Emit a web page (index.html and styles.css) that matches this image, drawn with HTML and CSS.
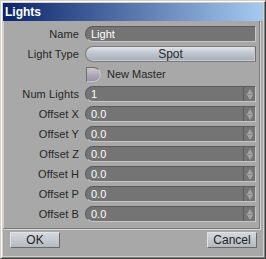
FILE: index.html
```html
<!DOCTYPE html>
<html>
<head>
<meta charset="utf-8">
<link rel="stylesheet" href="styles.css">
</head>
<body>
<div class="window">
  <div class="titlebar">Lights</div>
  <div class="body">
    <div class="panel">
      <div class="label">Name</div>
      <div class="field"><span class="val">Light</span></div>

      <div class="label">Light Type</div>
      <div class="popup">Spot</div>

      <div class="label"></div>
      <div class="check-row"><span class="check"></span><span class="check-label">New Master</span></div>

      <div class="label">Num Lights</div>
      <div class="field"><span class="val">1</span><span class="spin"><span class="up"></span><span class="sep"></span><span class="dn"></span></span></div>

      <div class="label">Offset X</div>
      <div class="field"><span class="val">0.0</span><span class="spin"><span class="up"></span><span class="sep"></span><span class="dn"></span></span></div>

      <div class="label">Offset Y</div>
      <div class="field"><span class="val">0.0</span><span class="spin"><span class="up"></span><span class="sep"></span><span class="dn"></span></span></div>

      <div class="label">Offset Z</div>
      <div class="field"><span class="val">0.0</span><span class="spin"><span class="up"></span><span class="sep"></span><span class="dn"></span></span></div>

      <div class="label">Offset H</div>
      <div class="field"><span class="val">0.0</span><span class="spin"><span class="up"></span><span class="sep"></span><span class="dn"></span></span></div>

      <div class="label">Offset P</div>
      <div class="field"><span class="val">0.0</span><span class="spin"><span class="up"></span><span class="sep"></span><span class="dn"></span></span></div>

      <div class="label">Offset B</div>
      <div class="field"><span class="val">0.0</span><span class="spin"><span class="up"></span><span class="sep"></span><span class="dn"></span></span></div>
    </div>
    <div class="footer">
      <div class="btn">OK</div>
      <div class="btn">Cancel</div>
    </div>
  </div>
</div>
</body>
</html>
```

FILE: styles.css
```css
html, body {
  margin: 0;
  padding: 0;
  background: #d4d0c8;
}
body {
  font-family: "Liberation Sans", Arial, sans-serif;
  font-size: 11px;
}
.window {
  width: 266px;
  height: 259px;
  box-sizing: border-box;
  background: #d4d0c8;
  border: 1px solid;
  border-color: #d4d0c8 #404040 #404040 #d4d0c8;
  box-shadow: inset 1px 1px #ffffff, inset -1px -1px #808080;
  padding: 2px;
  display: flex;
  flex-direction: column;
}
.titlebar {
  height: 18px;
  background: linear-gradient(to right, #0a246a, #a6caf0);
  color: #ffffff;
  font-weight: bold;
  font-size: 12px;
  line-height: 18px;
  padding-left: 2px;
}
.body {
  flex: 1;
  background: #a8a8a8;
  display: flex;
  flex-direction: column;
}
.panel {
  width: 257px;
  height: 208px;
  box-sizing: border-box;
  border-right: 1px solid #7a7a7a;
  border-bottom: 1px solid #7a7a7a;
  border-left: 1px solid #d0d0d0;
  box-shadow: 1px 1px 0 #d6d6d6;
  padding-top: 5px;
  display: grid;
  grid-template-columns: 75px 171px;
  grid-auto-rows: 16px;
  column-gap: 6px;
  row-gap: 4px;
  align-content: start;
}
.label {
  text-align: right;
  color: #262626;
  line-height: 16px;
  white-space: nowrap;
  letter-spacing: 0.1px;
}
.field {
  box-sizing: border-box;
  background: #747474;
  border-radius: 8px 0 0 8px;
  border-top: 1px solid #5a5a5a;
  border-left: 1px solid #5e5e5e;
  border-bottom: 1px solid #c6c6c6;
  border-right: 1px solid #c6c6c6;
  display: flex;
  align-items: center;
  color: #ffffff;
}
.val {
  flex: 1;
  padding-left: 5px;
  line-height: 14px;
}
.spin {
  width: 11px;
  height: 14px;
  border-left: 1px solid #5e5e5e;
  display: flex;
  flex-direction: column;
  align-items: center;
  justify-content: center;
}
.spin .up {
  width: 0;
  height: 0;
  border-left: 3.5px solid transparent;
  border-right: 3.5px solid transparent;
  border-bottom: 5px solid #a4a4a4;
}
.spin .sep {
  width: 7px;
  height: 1px;
  background: #8e8e8e;
}
.spin .dn {
  width: 0;
  height: 0;
  border-left: 3.5px solid transparent;
  border-right: 3.5px solid transparent;
  border-top: 5px solid #a4a4a4;
}
.popup {
  box-sizing: border-box;
  border-radius: 8px 0 0 8px;
  background: linear-gradient(to bottom, #dfe3e9, #bcc3cc 50%, #a4acb7);
  border: 1px solid #7c7c7c;
  border-right-color: #6e6e6e;
  box-shadow: inset -1px -1px #c8ccd2;
  text-align: center;
  line-height: 14px;
  color: #2a2a2a;
  font-size: 12px;
}
.check-row {
  display: flex;
  align-items: center;
  gap: 6px;
}
.check {
  width: 15px;
  height: 15px;
  box-sizing: border-box;
  margin-left: 1px;
  border-radius: 0 8px 8px 0;
  background: linear-gradient(to bottom, #cfc8ca, #aca5b6 60%, #9792ac);
  border-top: 1px solid #6c6c6c;
  border-left: 1px solid #6c6c6c;
  border-right: 1px solid #c4c4c4;
  border-bottom: 1px solid #c4c4c4;
}
.check-label {
  color: #262626;
}
.footer {
  display: flex;
  justify-content: space-between;
  padding: 3px 6px 0 7px;
}
.btn {
  width: 50px;
  height: 16px;
  box-sizing: border-box;
  background: linear-gradient(to bottom, #d4d8de, #b4b9c0);
  border: 1px solid;
  border-color: #e2e2e2 #6a6a6a #6a6a6a #e2e2e2;
  text-align: center;
  line-height: 14px;
  color: #222;
  font-size: 12px;
}
```
